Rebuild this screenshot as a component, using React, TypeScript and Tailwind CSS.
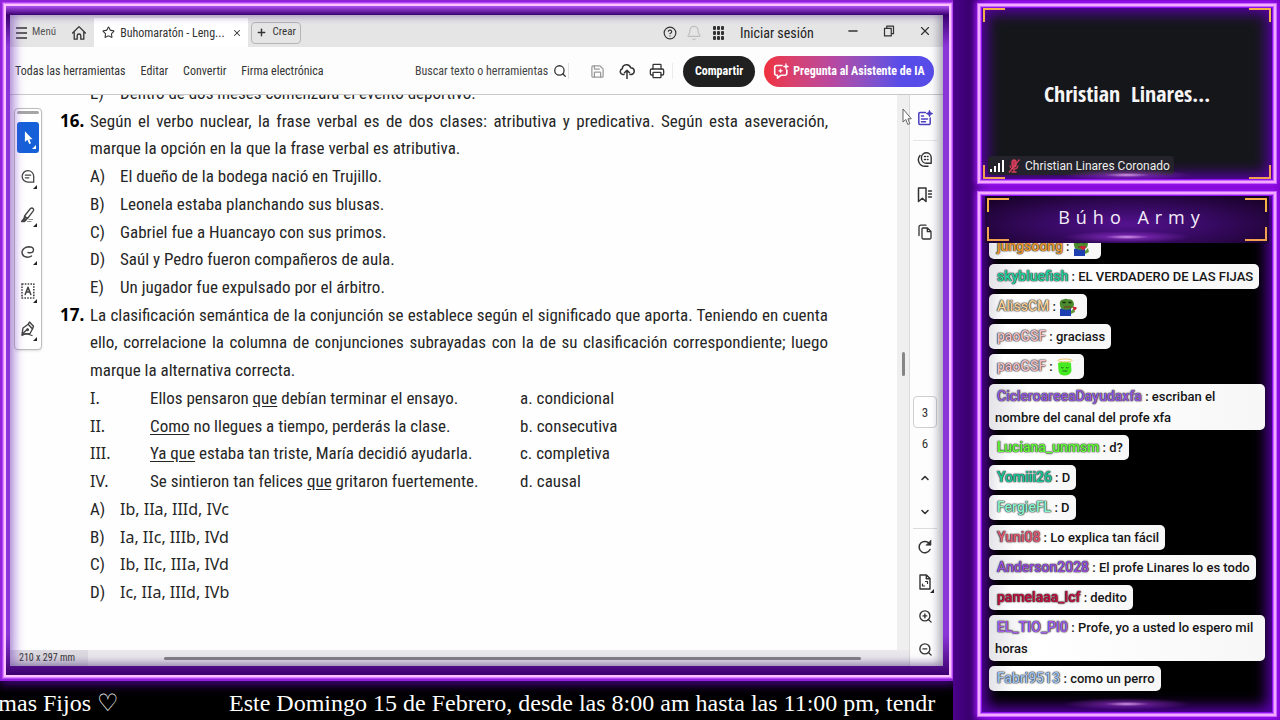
import type { ReactNode } from "react";
import { Star, X, Plus, CircleHelp, Bell, Search, Printer, Save, Minus, ChevronUp, ChevronDown, ZoomIn, ZoomOut } from "lucide-react";

const condensed = "font-['Roboto_Condensed','Roboto',sans-serif]";

type Question =
  | { kind: "text"; number?: string; text: string; justify?: boolean }
  | { kind: "option"; label: string; text: string; roman?: boolean }
  | { kind: "match"; label: string; before: string; link: string; after: string; answer: string };

const lines: Question[] = [
  { kind: "option", label: "E)", text: "Dentro de dos meses comenzará el evento deportivo." },
  { kind: "text", number: "16.", text: "Según el verbo nuclear, la frase verbal es de dos clases: atributiva y predicativa. Según esta aseveración,", justify: true },
  { kind: "text", text: "marque la opción en la que la frase verbal es atributiva." },
  { kind: "option", label: "A)", text: "El dueño de la bodega nació en Trujillo." },
  { kind: "option", label: "B)", text: "Leonela estaba planchando sus blusas." },
  { kind: "option", label: "C)", text: "Gabriel fue a Huancayo con sus primos." },
  { kind: "option", label: "D)", text: "Saúl y Pedro fueron compañeros de aula." },
  { kind: "option", label: "E)", text: "Un jugador fue expulsado por el árbitro." },
  { kind: "text", number: "17.", text: "La clasificación semántica de la conjunción se establece según el significado que aporta. Teniendo en cuenta", justify: true },
  { kind: "text", text: "ello, correlacione la columna de conjunciones subrayadas con la de su clasificación correspondiente; luego", justify: true },
  { kind: "text", text: "marque la alternativa correcta." },
  { kind: "match", label: "I.", before: "Ellos pensaron ", link: "que", after: " debían terminar el ensayo.", answer: "a. condicional" },
  { kind: "match", label: "II.", before: "", link: "Como", after: " no llegues a tiempo, perderás la clase.", answer: "b. consecutiva" },
  { kind: "match", label: "III.", before: "", link: "Ya que", after: " estaba tan triste, María decidió ayudarla.", answer: "c. completiva" },
  { kind: "match", label: "IV.", before: "Se sintieron tan felices ", link: "que", after: " gritaron fuertemente.", answer: "d. causal" },
  { kind: "option", label: "A)", text: "Ib, IIa, IIId, IVc", roman: true },
  { kind: "option", label: "B)", text: "Ia, IIc, IIIb, IVd", roman: true },
  { kind: "option", label: "C)", text: "Ib, IIc, IIIa, IVd", roman: true },
  { kind: "option", label: "D)", text: "Ic, IIa, IIId, IVb", roman: true },
];

const roman = "font-['Noto_Sans',sans-serif] text-[16px]";

function Line({ line }: { line: Question }) {
  if (line.kind === "text") {
    return (
      <div className="flex items-center">
        <span className="w-[30px] shrink-0 font-['Noto_Sans',sans-serif] font-bold text-black">{line.number}</span>
        <p className={line.justify ? "grow text-justify [text-align-last:justify]" : "grow"}>{line.text}</p>
      </div>
    );
  }
  if (line.kind === "option") {
    return (
      <div className="flex items-center pl-[30px]">
        <span className="w-[30px] shrink-0">{line.label}</span>
        <p className={line.roman ? roman : ""}>{line.text}</p>
      </div>
    );
  }
  return (
    <div className="flex items-center pl-[30px]">
      <span className={`w-[60px] shrink-0 ${roman}`}>{line.label}</span>
      <p className="w-[370px] shrink-0">
        {line.before}
        <span className="underline underline-offset-2">{line.link}</span>
        {line.after}
      </p>
      <p>{line.answer}</p>
    </div>
  );
}

function Svg({ className, children }: { className?: string; children: ReactNode }) {
  return (
    <svg viewBox="0 0 16 16" fill="none" stroke="currentColor" strokeWidth="1.3" strokeLinecap="round" strokeLinejoin="round" className={className ?? "h-4 w-4"} aria-hidden="true">
      {children}
    </svg>
  );
}

function IconButton({ label, className, children }: { label: string; className: string; children: ReactNode }) {
  return (
    <button type="button" aria-label={label} className={`flex shrink-0 items-center justify-center ${className}`}>
      {children}
    </button>
  );
}

function Corner() {
  return (
    <svg viewBox="0 0 4 4" className="absolute right-0 bottom-0 h-1 w-1" aria-hidden="true">
      <path d="M4 0V4H0Z" fill="#222" />
    </svg>
  );
}

function Tool({ label, children }: { label: string; children: ReactNode }) {
  return (
    <IconButton label={label} className="h-[38px]">
      <span className="relative flex h-[21px] w-[18px] items-start justify-start pt-px pl-[2px]">
        {children}
        <Corner />
      </span>
    </IconButton>
  );
}

function TitleBar() {
  return (
    <header className={`flex h-8 shrink-0 items-center bg-[#e5e5e5] pt-[3px] text-[#333] ${condensed}`}>
      <button type="button" className="flex items-center gap-[5px] pl-[6px] text-[11px] text-[#555]">
        <svg viewBox="0 0 11 12" className="h-3 w-[11px]" stroke="#333" strokeWidth="1.4" aria-hidden="true">
          <path d="M0 1H11M0 6H11M0 11H11" />
        </svg>
        Menú
      </button>
      <IconButton label="Inicio" className="w-[38px]">
        <Svg className="ml-2 h-4 w-4">
          <path d="M1.6 8 8 1.600 14.400 8M3.200 7.500V14.200H6.200V10.500Q6.200 9 8 9T9.800 10.500V14.200H12.800V7.500" />
        </Svg>
      </IconButton>
      <div className="flex h-[29px] w-[154px] items-center self-end bg-white pl-2 text-xs">
        <Star className="mr-[5px] h-[13px] w-[13px] shrink-0" strokeWidth={2} />
        <span className="grow whitespace-nowrap">Buhomaratón - Leng...</span>
        <IconButton label="Cerrar pestaña" className="w-6">
          <X className="h-[10px] w-[10px]" strokeWidth={2.5} />
        </IconButton>
      </div>
      <button type="button" className="ml-[3px] flex h-[22px] w-[50px] items-center justify-center gap-[5px] rounded border border-[#b5b5b5] text-[11px]">
        <Plus className="h-[11px] w-[11px]" strokeWidth={3} />
        Crear
      </button>
      <div className="grow" />
      <IconButton label="Ayuda" className="w-6">
        <CircleHelp className="h-[14px] w-[14px]" strokeWidth={2} />
      </IconButton>
      <IconButton label="Notificaciones" className="w-6 text-[#bdbdbd]">
        <Bell className="h-4 w-4" strokeWidth={1.7} />
      </IconButton>
      <IconButton label="Aplicaciones" className="w-6">
        <svg viewBox="0 0 11 14" className="h-[14px] w-[11px]" fill="#333" aria-hidden="true">
          {[0, 4, 8].map((x) => [0, 5, 10].map((y) => <rect key={`${x}-${y}`} x={x} y={y} width="3" height="4" rx="1" />))}
        </svg>
      </IconButton>
      <button type="button" className="w-[105px] pl-[10px] text-left text-sm text-[#222]">Iniciar sesión</button>
      <IconButton label="Minimizar" className="h-[26px] w-9 self-start"><Minus className="h-[14px] w-[14px]" strokeWidth={2.6} /></IconButton>
      <IconButton label="Restaurar" className="h-[26px] w-9 self-start">
        <Svg className="h-3 w-3"><path d="M2 4.500H11V14.500H2ZM5 4V1.500H14V11.500H11.500" strokeWidth="1.600" /></Svg>
      </IconButton>
      <IconButton label="Cerrar" className="h-[26px] w-9 self-start"><X className="h-[14px] w-[14px]" strokeWidth={2} /></IconButton>
    </header>
  );
}

function ToolBar() {
  return (
    <div className={`flex h-12 shrink-0 items-center border-b border-[#c9c9c9] bg-[#fdfdfd] pt-px pr-[9px] pl-[5px] text-xs text-[#333] ${condensed}`}>
      <nav className="flex grow gap-[15px] whitespace-nowrap">
        <a href="#herramientas">Todas las herramientas</a>
        <a href="#editar">Editar</a>
        <a href="#convertir">Convertir</a>
        <a href="#firma">Firma electrónica</a>
      </nav>
      <input type="text" aria-label="Buscar texto o herramientas" placeholder="Buscar texto o herramientas" className="w-[138px] outline-none placeholder:text-[#444]" />
      <Search className="mr-px h-[14px] w-[14px]" strokeWidth={2.2} />
      <span className="mr-[13px] h-4 w-px bg-[#e2e2e2]" />
      <IconButton label="Guardar" className="w-[30px] text-[#999]"><Save className="h-[15px] w-[15px]" strokeWidth={2} /></IconButton>
      <IconButton label="Subir" className="w-[30px]">
        <Svg className="h-4 w-4">
          <path d="M5 11.500H3.800A3 3 0 0 1 3.300 5.700 4.300 4.300 0 0 1 11.700 4.700 3.400 3.400 0 0 1 12 11.500H11M8 15.500V7.500M5.500 9.800 8 7.300 10.500 9.800" strokeWidth="1.500" />
        </Svg>
      </IconButton>
      <IconButton label="Imprimir" className="w-[30px]"><Printer className="h-4 w-4" strokeWidth={1.9} /></IconButton>
      <span className="mr-[10px] h-4 w-px bg-[#ececec]" />
      <button type="button" className="h-[31px] w-[72px] rounded-full bg-[#202020] text-xs font-bold text-white">Compartir</button>
      <button type="button" className="ml-[9px] flex h-[31px] w-[170px] items-center justify-center gap-[4px] rounded-full bg-linear-to-r from-[#f0303c] via-[#b847a0] via-40% to-[#584ce8] to-80% text-xs font-bold whitespace-nowrap text-white">
        <Svg className="h-[18px] w-4">
          <path d="M9 2.500H3.500A1.800 1.800 0 0 0 1.700 4.300V10.500A1.800 1.800 0 0 0 3.500 12.300H4.500V15.200L7.800 12.300H12A1.800 1.800 0 0 0 13.800 10.500V7" strokeWidth="1.600" />
          <path d="M13 .5 13.800 2.700 16 3.500 13.800 4.300 13 6.500 12.200 4.300 10 3.500 12.200 2.700ZM7.500 5.800 8.200 7.300 9.700 7.800 8.200 8.400 7.500 9.900 6.800 8.400 5.300 7.800 6.800 7.300Z" fill="currentColor" strokeWidth=".4" />
        </Svg>
        Pregunta al Asistente de IA
      </button>
    </div>
  );
}

function ToolBox() {
  return (
    <aside className="mt-[13px] flex w-7 shrink-0 flex-col self-start rounded border border-[#bcbcbc] bg-white px-[2px] pt-[2px] text-[#444] shadow-sm">
      <span className="h-[3px] rounded bg-[#a6a6a6]" />
      <button type="button" aria-label="Seleccionar" className="relative mt-2 mb-[6px] flex h-[31px] items-center justify-center rounded-[3px] bg-[#1560d8] text-white">
        <svg viewBox="0 0 10 15" className="h-[14px] w-[9px]" fill="currentColor" aria-hidden="true">
          <path d="M1 0V12L3.800 9.500 5.800 14.300 7.800 13.400 5.900 8.800H9.500Z" />
        </svg>
        <svg viewBox="0 0 4 4" className="absolute right-[3px] bottom-1 h-1 w-1" aria-hidden="true"><path d="M4 0V4H0Z" fill="#fff" /></svg>
      </button>
      <Tool label="Comentar">
        <Svg className="h-[15px] w-[14px]"><path d="M14.500 14.500V7.500A6.600 6.600 0 1 0 8 14.500ZM5 6.500H11M5 9.500H9" strokeWidth="1.500" /></Svg>
      </Tool>
      <Tool label="Resaltar">
        <Svg><path d="M3.500 9 9.500 1.500Q11 .3 12.300 1.800 13 2.800 12.300 3.900L6.500 11.500 3 12.500ZM3.500 9 6.500 11.500" /><path d="M3 11.500 .5 14.500H3.500L5.500 12.500Z" fill="currentColor" /><path d="M8 12.500H11.500M6.500 14.500H10" strokeWidth="1.200" opacity=".6" /></Svg>
      </Tool>
      <Tool label="Dibujar">
        <Svg><path d="M7 7.500Q12.500 8.800 12.500 4.800 12.300 1.800 7.800 1.800 2.200 2.300 1 6.800 .8 11.800 6.500 12.300 9 12.300 10.500 11" strokeWidth="1.400" /></Svg>
      </Tool>
      <Tool label="Agregar texto">
        <Svg><path d="M1 1H12.800V15H1Z" strokeDasharray="1.600 1.200" strokeWidth="1.600" strokeLinecap="butt" /><path d="M4.200 11.500 7 4.200 9.800 11.500M5 9H9" strokeWidth="1.500" /></Svg>
      </Tool>
      <Tool label="Firmar">
        <Svg><path d="M1 13.500 2 7 7.200 3.200 11.500 8 9 12.500ZM7.200 3.200 8.500 1 12.500 5.300 11.500 8M1.300 13 5.800 8.800M6.500 8A.8 .8 0 1 0 6.600 8" strokeWidth="1.400" /><path d="M1 14.500 5 12.500 11 14.500" /></Svg>
      </Tool>
    </aside>
  );
}

function Rail() {
  return (
    <aside className={`flex w-[34px] shrink-0 flex-col items-center border-l border-[#d9d9d9] bg-[#fdfdfd] pr-[3px] text-[#333] ${condensed}`}>
      <IconButton label="Asistente" className="h-[45px] text-[#4b3fc0]">
        <Svg><path d="M8.500 2.500H3A1.200 1.200 0 0 0 1.800 3.700V13.300A1.200 1.200 0 0 0 3 14.500H12A1.200 1.200 0 0 0 13.200 13.300V8M4.500 6H6.500M4.500 9H10.500M4.500 11.800H8.500" strokeWidth="1.500" /><path d="M12.500 .5 13.500 2.600 15.700 3.600 13.500 4.600 12.500 6.700 11.500 4.600 9.300 3.600 11.500 2.600Z" fill="currentColor" strokeWidth=".8" /></Svg>
      </IconButton>
      <span className="h-px w-6 bg-[#e5e5e5]" />
      <IconButton label="Comentarios" className="h-9">
        <Svg><path d="M14.200 12.300V6.500A4.900 5.300 0 1 0 9.300 12.300ZM3 4.500A6.500 6.500 0 0 0 8.500 15.200H11" strokeWidth="1.400" /><path d="M7.500 5.500H11M7.500 8.500H11" strokeWidth="1.500" strokeDasharray="1 2" /></Svg>
      </IconButton>
      <IconButton label="Marcadores" className="h-9">
        <Svg><path d="M1.500 1H9V14.500L5.300 11.300 1.500 14.500Z" strokeWidth="1.500" /><path d="M11.500 4H14.500M11.500 7H14.500M11.500 10H14.500" /></Svg>
      </IconButton>
      <IconButton label="Miniaturas" className="h-[38px]">
        <Svg><path d="M2 11.500V3A1.800 1.800 0 0 1 3.800 1.200H9M5.500 4H10.500L14 7.500V13.800A1.200 1.200 0 0 1 12.800 15H6.200A1.200 1.200 0 0 1 5 13.800V4.500M10.300 4V7.700H14" /></Svg>
      </IconButton>
      <div className="grow" />
      <input aria-label="Página" defaultValue="3" className="h-8 w-6 rounded border border-[#cfcfcf] bg-white text-center text-[13px]" />
      <span className="h-8 text-[13px] leading-8">6</span>
      <IconButton label="Página anterior" className="h-9"><ChevronUp className="h-3 w-3" strokeWidth={3.2} /></IconButton>
      <IconButton label="Página siguiente" className="h-8"><ChevronDown className="h-3 w-3" strokeWidth={3.2} /></IconButton>
      <span className="h-px w-6 bg-[#dcdcdc]" />
      <IconButton label="Girar" className="h-[36px]">
        <Svg><path d="M13 10.500A5.700 5.700 0 1 1 12.500 4.800" strokeWidth="1.500" /><path d="M14 1.300V6.200H9.200Z" fill="currentColor" strokeWidth=".6" /></Svg>
      </IconButton>
      <IconButton label="Ajustar página" className="h-[34px]">
        <span className="relative flex h-[22px] w-[18px] items-center justify-center">
          <Svg><path d="M3 1H9.500L13 4.500V15H3ZM9.300 1V4.700H13" strokeWidth="1.400" /><path d="M8.500 7.500H10.500V9.500M7.500 12H5.500V10" strokeWidth="1.200" /></Svg>
          <Corner />
        </span>
      </IconButton>
      <IconButton label="Acercar" className="h-[34px]"><ZoomIn className="h-[15px] w-[15px]" strokeWidth={2.200} /></IconButton>
      <IconButton label="Alejar" className="h-[33px]"><ZoomOut className="h-[15px] w-[15px]" strokeWidth={2.200} /></IconButton>
    </aside>
  );
}

function Reader() {
  return (
    <main className="relative flex min-h-0 flex-1 flex-col overflow-hidden bg-[#fefefe]">
      <TitleBar />
      <ToolBar />
      <div className="flex min-h-0 flex-1">
        <div className="flex min-w-0 flex-1 flex-col">
          <div className="flex min-h-0 flex-1">
            <div className="flex min-w-0 flex-1 overflow-hidden pl-1">
              <ToolBox />
              <article className={`-mt-4 mr-[69px] ml-[18px] grid h-[527px] flex-1 auto-rows-fr text-[17px] leading-6 whitespace-nowrap text-[#262626] ${condensed}`}>
                {lines.map((line, i) => <Line key={i} line={line} />)}
              </article>
            </div>
            <div className="relative w-3 shrink-0 bg-[#efeff0] pt-[257px]">
              <span className="mx-auto block h-6 w-[3px] rounded bg-[#858585]" />
              <svg viewBox="0 0 10 18" className="absolute top-[13px] left-[5px] h-[18px] w-[10px]" fill="#fff" stroke="#555" strokeWidth=".9" aria-hidden="true">
                <path d="M1 1V14L3.800 11.500 5.800 16.500 7.800 15.600 5.900 10.800H9.300Z" />
              </svg>
            </div>
          </div>
          <footer className="flex h-4 shrink-0 items-center bg-[#eae8ed]">
            <span className={`h-full w-[78px] bg-[#dcd9e0] pl-[9px] text-[10px] leading-4 text-[#333] ${condensed}`}>210 x 297 mm</span>
            <span className="mr-[48px] ml-[76px] h-[3px] flex-1 rounded bg-[#858388]" />
          </footer>
        </div>
        <Rail />
      </div>
      <div className="pointer-events-none absolute inset-0 shadow-[inset_0_-4px_10px_rgba(70,50,100,0.25),inset_-5px_0_9px_rgba(60,60,90,0.3),inset_6px_0_10px_rgba(140,80,220,0.45)]" />
    </main>
  );
}

function Brackets({ className }: { className: string }) {
  return (
    <div className={`pointer-events-none absolute ${className}`}>
      <span className="absolute top-0 left-0 h-[14px] w-[22px] border-t-2 border-l-2 border-[#f5b04a]" />
      <span className="absolute top-0 right-0 h-[14px] w-[22px] border-t-2 border-r-2 border-[#f5b04a]" />
      <span className="absolute bottom-0 left-0 h-[14px] w-[22px] border-b-2 border-l-2 border-[#f0a050]" />
      <span className="absolute right-0 bottom-0 h-[14px] w-[22px] border-r-2 border-b-2 border-[#f0a050]" />
    </div>
  );
}

const neon = "border-2 border-[#f3abff] shadow-[0_0_0_1px_#c763ff,0_0_6px_2px_#a41cff]";
const innerGlow = "pointer-events-none absolute inset-0 shadow-[inset_0_0_0_1px_#c763ff,inset_0_0_0_2px_#8d10ee,inset_0_0_14px_7px_#5a00ac]";

function Camera() {
  return (
    <section className={`relative h-[179px] shrink-0 bg-[#15161a] ${neon}`}>
      <div className={innerGlow} />
      <div className="relative flex h-full flex-col">
        <p className="flex flex-1 items-center justify-center pt-[24px] font-['Open_Sans_Condensed','Noto_Sans',sans-serif] text-[22px] font-bold whitespace-pre text-[#f5f5f5]">Christian  Linares...</p>
        <div className="mb-[6px] ml-2 flex h-[19px] w-fit items-center rounded bg-[#24222a] pr-1 pl-[2px] font-['Roboto','Noto_Sans',sans-serif] text-[12px] text-[#eee]">
          <svg viewBox="0 0 14 12" className="h-3 w-[14px]" fill="#fff" aria-hidden="true">
            <path d="M0 9H2V12H0ZM4 6H6V12H4ZM8 3H10V12H8ZM12 0H14V12H12Z" />
          </svg>
          <svg viewBox="0 0 12 14" className="mr-[5px] ml-[4px] h-[14px] w-3" fill="none" stroke="#d8405c" strokeWidth="1.300" aria-hidden="true">
            <rect x="4" y="1" width="4" height="7" rx="2" fill="#b83450" />
            <path d="M2 6.500Q2.500 10 6 10T10 6.500M6 10V13M3.500 13H8.500M1 13.500 11.500 .5" />
          </svg>
          Christian Linares Coronado
        </div>
      </div>
      <Brackets className="inset-x-[3px] inset-y-[2px]" />
      <Flare className="bottom-0" />
    </section>
  );
}

function Flare({ className }: { className: string }) {
  return <div className={`pointer-events-none absolute left-1/2 h-3 w-32 -translate-x-1/2 bg-[radial-gradient(closest-side,#eeb0ffdd,#a338e077_35%,transparent)] ${className}`} />;
}

function FrogEmote({ heart }: { heart?: boolean }) {
  return (
    <svg viewBox="0 0 18 18" className="inline-block h-[18px] w-[18px]" aria-hidden="true">
      <path d="M1 11Q4 9 12 10V18H1Z" fill="#1d3fb0" />
      <path d="M1 7Q0 2 4 1.500 7 0 9.500 1.500 13 .5 14.500 4 16 8 12.500 10.500 7 13 2.500 10.500 1 9.500 1 7Z" fill="#4c8a2e" />
      <path d="M3.500 4.500H6.500M9.500 4.500H12.500" stroke="#132b10" strokeWidth="1.600" />
      <path d="M5 9H12" stroke="#7a3b24" strokeWidth="1.200" />
      {heart && <path d="M7 9.500 8.500 7.500 10 8.500 11.500 7.500 13 9.500 10 12.500Z" fill="#d31f3a" />}
      <path d="M12 13 15 10 16 14 12 16Z" fill="#5c9a3a" />
      {!heart && <path d="M13.500 9.500Q14.800 7.800 15.800 9.300 17.500 8.500 17.800 10.300L15.500 12.800Z" fill="#cc1f2f" />}
    </svg>
  );
}

function AngelEmote() {
  return (
    <svg viewBox="0 0 18 18" className="inline-block h-[18px] w-[18px]" aria-hidden="true">
      <path d="M2 5Q9 2.500 15 5L15.500 13Q14 17.500 8.500 17.500 3.500 17.500 2.500 13Z" fill="#46ea22" />
      <ellipse cx="9" cy="2.500" rx="7" ry="1.500" fill="none" stroke="#edc868" strokeWidth="1" />
      <path d="M5 9.500Q6.500 10.500 7.500 9.500M10 9.500Q11.500 10.500 12.500 9.500M6.500 13H11.500" fill="none" stroke="#1a7010" strokeWidth="1" />
    </svg>
  );
}

const messages: { user: string; color: string; body: ReactNode }[] = [
  { user: "jungsoong", color: "text-[#f29a2e]", body: <FrogEmote heart /> },
  { user: "skybluefish", color: "text-[#22d3a2]", body: "EL VERDADERO DE LAS FIJAS" },
  { user: "AlissCM", color: "text-[#f5d19c]", body: <FrogEmote /> },
  { user: "paoGSF", color: "text-[#f0c0cc]", body: "graciass" },
  { user: "paoGSF", color: "text-[#f0c0cc]", body: <AngelEmote /> },
  { user: "CicleroareeaDayudaxfa", color: "text-[#9a5be0]", body: "escriban el nombre del canal del profe xfa" },
  { user: "Luciana_unmsm", color: "text-[#63ff38]", body: "d?" },
  { user: "Yomiii26", color: "text-[#18c79c]", body: "D" },
  { user: "FergieFL", color: "text-[#8cf5d2]", body: "D" },
  { user: "Yuni08", color: "text-[#e25a78]", body: "Lo explica tan fácil" },
  { user: "Anderson2028", color: "text-[#9a50dc]", body: "El profe Linares lo es todo" },
  { user: "pamelaaa_lcf", color: "text-[#c01040]", body: "dedito" },
  { user: "EL_TIO_PI0", color: "text-[#a860ee]", body: "Profe, yo a usted lo espero mil horas" },
  { user: "Fabri9513", color: "text-[#a4c6f0]", body: "como un perro" },
];

function Chat() {
  return (
    <section className={`relative flex min-h-0 flex-1 flex-col bg-black ${neon}`}>
      <div className={innerGlow} />
      <h2 className="relative mx-[5px] mt-[2px] flex h-[47px] shrink-0 items-center justify-center bg-[radial-gradient(ellipse_at_50%_60%,#54128f,#35095f_45%,#14001f)] pb-[5px] pl-[10px] font-['Open_Sans','Noto_Sans',sans-serif] text-[18px] font-medium tracking-[6px] text-[#f4eefa]">
        Búho Army
        <Brackets className="inset-x-[2px] inset-y-[2px]" />
        <Flare className="bottom-0" />
      </h2>
      <ul className="relative flex min-h-0 flex-1 flex-col items-start justify-end gap-[5px] overflow-hidden pr-[9px] pb-[23px] pl-[9px] font-['Roboto',sans-serif] text-[13px] leading-[21px] font-medium text-[#151515]">
        {messages.map((m, i) => (
          <li key={i} className="min-h-[25px] max-w-full shrink-0 rounded-[5px] bg-white bg-linear-to-r from-[#e4e3e8] via-white via-15% to-[#f7f7f8] px-[6px] py-[2px]">
            <span className={`ml-[2px] text-sm leading-[21px] font-medium [text-shadow:0_0_1px_#333,0_0_1px_#333,0_0_2px_#333] ${m.color}`}>{m.user}</span>
            {" : "}
            {typeof m.body === "string" ? m.body : <span className="mr-1 inline-flex h-[21px] items-center align-top">{m.body}</span>}
          </li>
        ))}
      </ul>
      <Flare className="bottom-1" />
    </section>
  );
}

export default function App() {
  return (
    <div className="flex h-screen overflow-hidden bg-[#46007f]">
      <div className="flex min-w-0 flex-1 flex-col bg-black">
        <div className="z-10 mt-[4px] mr-[2px] ml-[4px] flex min-h-0 flex-1 flex-col border-2 border-[#ffc4ff] bg-[linear-gradient(#b050f0,#3a0070_9px,#8a35d8_40px,#8a35d8_94%,#3d006e)] pt-[9px] pr-[6px] pb-[9px] pl-[4px] shadow-[0_0_0_1px_#dc86ff,0_0_0_2px_#b545f5,0_0_0_4px_#8f22d8,0_2px_10px_5px_#4a008c]">
          <Reader />
        </div>
        <p className="flex h-[43px] shrink-0 items-center gap-[110px] overflow-hidden pt-[8px] font-['Liberation_Serif',serif] text-2xl whitespace-nowrap text-white">
          <span className="flex w-[119px] shrink-0 justify-end">de Temas Fijos ♡</span>
          <span>Este Domingo 15 de Febrero, desde las 8:00 am hasta las 11:00 pm, tendr</span>
        </p>
      </div>
      <aside className="z-20 flex w-[327px] shrink-0 flex-col gap-[9px] bg-linear-to-r from-[#4a008a] via-[#3b0070] via-5% to-[#7a00c8] to-12% pt-1 pr-1 pb-1 pl-[25px]">
        <Camera />
        <Chat />
      </aside>
    </div>
  );
}
